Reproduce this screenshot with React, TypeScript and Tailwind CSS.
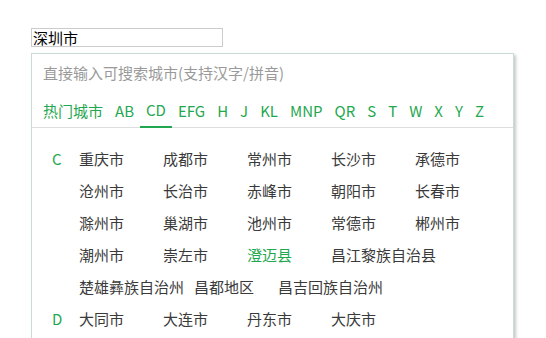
import React from 'react';

const tabs = ['热门城市', 'AB', 'CD', 'EFG', 'H', 'J', 'KL', 'MNP', 'QR', 'S', 'T', 'W', 'X', 'Y', 'Z'];

type Group = { letter: string; cities: string[] };

const groups: Group[] = [
  {
    letter: 'C',
    cities: [
      '重庆市', '成都市', '常州市', '长沙市', '承德市',
      '沧州市', '长治市', '赤峰市', '朝阳市', '长春市',
      '滁州市', '巢湖市', '池州市', '常德市', '郴州市',
      '潮州市', '崇左市', '澄迈县', '昌江黎族自治县',
      '楚雄彝族自治州', '昌都地区', '昌吉回族自治州',
    ],
  },
  { letter: 'D', cities: ['大同市', '大连市', '丹东市', '大庆市'] },
];

const activeTab = 'CD';
const activeCity = '澄迈县';

function CityGroup({ letter, cities }: Group) {
  return (
    <div className="flex">
      <div className="w-[27px] text-[15px] leading-[32px] text-[#1fa84f]">{letter}</div>
      <div className="flex w-[430px] flex-wrap">
        {cities.map((city) => (
          <span
            key={city}
            className={
              'mr-[10px] min-w-[74px] whitespace-nowrap text-[15px] leading-[32px] ' +
              (city === activeCity ? 'text-[#1fa84f]' : 'text-[#3a3a3a]')
            }
          >
            {city}
          </span>
        ))}
      </div>
    </div>
  );
}

export default function App() {
  return (
    <div
      className="h-[338px] w-[546px] overflow-hidden bg-white pl-[31px] pt-[28px]"
      style={{ fontFamily: '"Noto Sans CJK SC", "Noto Sans", sans-serif' }}
    >
      <input
        readOnly
        defaultValue="深圳市"
        className="block h-[19px] w-[192px] border border-[#cccccc] px-[1px] text-[15px] leading-[17px] text-black outline-none"
      />
      <div className="mt-[6px] w-[483px] border border-[#c9ddd2] shadow-[2px_2px_3px_rgba(0,0,0,0.22)]">
        <div className="flex h-[38px] items-center px-[11px] text-[15px] text-[#9a9a9a]">
          直接输入可搜索城市(支持汉字/拼音)
        </div>
        <div className="flex h-[36px] border-b border-[#dddddd] pl-[5px] pt-[2px]">
          {tabs.map((tab) => (
            <div
              key={tab}
              className={
                'mb-[-1px] flex items-center px-[6px] text-[15px] text-[#1fa84f] ' +
                (tab === activeTab ? 'border-b-2 border-[#1fa84f]' : '')
              }
            >
              {tab}
            </div>
          ))}
        </div>
        <div className="pl-[20px] pt-[15px] pb-[10px]">
          {groups.map((g) => (
            <CityGroup key={g.letter} {...g} />
          ))}
        </div>
      </div>
    </div>
  );
}
